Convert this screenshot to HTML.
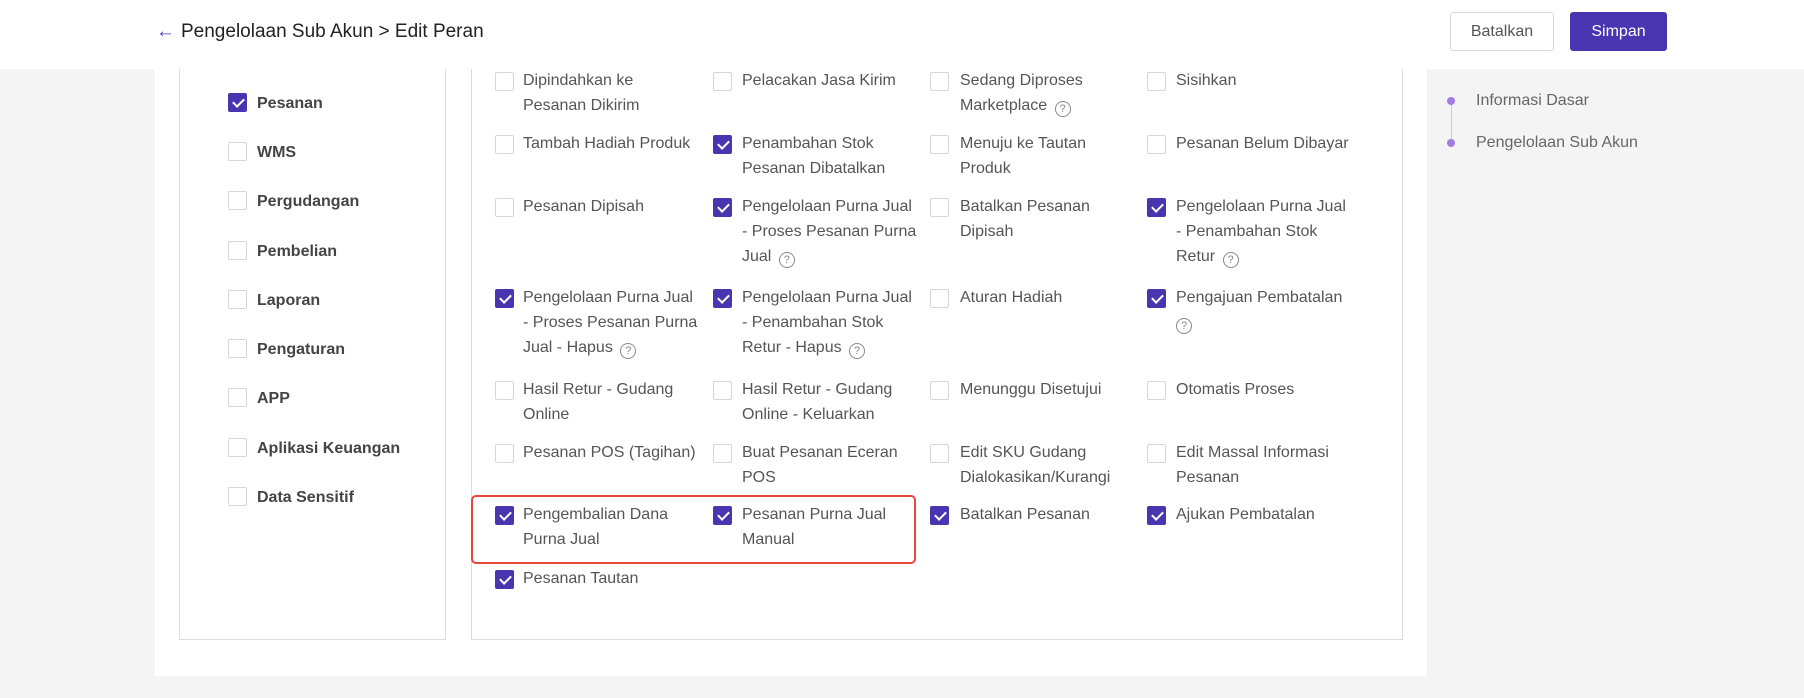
<!DOCTYPE html>
<html><head><meta charset="utf-8"><style>
*{margin:0;padding:0;box-sizing:border-box}
body{width:1804px;height:698px;background:#f4f4f4;font-family:"Liberation Sans",sans-serif;position:relative;overflow:hidden;color:#555}
.hdr{position:absolute;left:0;top:0;width:1804px;height:69px;background:#fff}
.title{position:absolute;left:156px;top:21px;font-size:19px;color:#222}
.title .ar{color:#4a35b1;margin-right:6px;font-weight:normal}
.btn{position:absolute;top:12px;height:39px;border-radius:3px;font-size:16px;line-height:37px;text-align:center}
.b1{left:1450px;width:104px;border:1px solid #d8d8d8;color:#555;background:#fff}
.b2{left:1570px;width:97px;background:#4a35b1;color:#fff;border:1px solid #4a35b1}
.main{position:absolute;left:155px;top:69px;width:1272px;height:607px;background:#fff}
.lbox{position:absolute;left:179px;top:69px;width:267px;height:571px;border:1px solid #dcdcdc;border-top:none}
.rbox{position:absolute;left:471px;top:69px;width:932px;height:571px;border:1px solid #dcdcdc;border-top:none}
.cb{position:absolute;width:19px;height:19px;border:1px solid #d6d6d6;border-radius:2px;background:#fff}
.cb.c{background:#4a35b1;border-color:#4a35b1}
.cb.c:after{content:"";position:absolute;left:6px;top:2px;width:5px;height:9px;border:solid #fff;border-width:0 2px 2px 0;transform:rotate(45deg)}
.ll{position:absolute;font-size:16px;font-weight:bold;color:#444;margin-top:1px}
.it{position:absolute;font-size:16px;line-height:25px;color:#555;white-space:nowrap}
.q{display:inline-block;width:16px;height:16px;border:1.3px solid #888;border-radius:50%;font-size:11px;line-height:14px;text-align:center;color:#888;vertical-align:-2px;margin-left:3px}
.red{position:absolute;left:471px;top:495px;width:445px;height:69px;border:2.5px solid #e8473f;border-radius:5px}
.side{position:absolute;font-size:16px;color:#666}
.dot{position:absolute;width:8px;height:8px;border-radius:50%;background:#a07de0}
</style></head><body>
<div class="hdr"></div>
<div class="title"><span class="ar">←</span>Pengelolaan Sub Akun &gt; Edit Peran</div>
<div class="btn b1">Batalkan</div>
<div class="btn b2">Simpan</div>
<div class="main"></div>
<div class="lbox"></div>
<div class="rbox"></div>
<div class="line" style="position:absolute;left:1451px;top:104px;width:1px;height:40px;background:#ccc"></div>
<div class="dot" style="left:1447px;top:97px"></div>
<div class="dot" style="left:1447px;top:139px"></div>
<div class="side" style="left:1476px;top:92px">Informasi Dasar</div>
<div class="side" style="left:1476px;top:134px">Pengelolaan Sub Akun</div>

<div class="cb c" style="left:228px;top:93px"></div><div class="ll" style="left:257px;top:94px">Pesanan</div>
<div class="cb" style="left:228px;top:142px"></div><div class="ll" style="left:257px;top:143px">WMS</div>
<div class="cb" style="left:228px;top:191px"></div><div class="ll" style="left:257px;top:192px">Pergudangan</div>
<div class="cb" style="left:228px;top:241px"></div><div class="ll" style="left:257px;top:242px">Pembelian</div>
<div class="cb" style="left:228px;top:290px"></div><div class="ll" style="left:257px;top:291px">Laporan</div>
<div class="cb" style="left:228px;top:339px"></div><div class="ll" style="left:257px;top:340px">Pengaturan</div>
<div class="cb" style="left:228px;top:388px"></div><div class="ll" style="left:257px;top:389px">APP</div>
<div class="cb" style="left:228px;top:438px"></div><div class="ll" style="left:257px;top:439px">Aplikasi Keuangan</div>
<div class="cb" style="left:228px;top:487px"></div><div class="ll" style="left:257px;top:488px">Data Sensitif</div>

<div class="cb" style="left:495px;top:72px"></div><div class="it" style="left:523px;top:68px">Dipindahkan ke<br>Pesanan Dikirim</div>
<div class="cb" style="left:713px;top:72px"></div><div class="it" style="left:742px;top:68px">Pelacakan Jasa Kirim</div>
<div class="cb" style="left:930px;top:72px"></div><div class="it" style="left:960px;top:68px">Sedang Diproses<br>Marketplace <span class="q">?</span></div>
<div class="cb" style="left:1147px;top:72px"></div><div class="it" style="left:1176px;top:68px">Sisihkan</div>

<div class="cb" style="left:495px;top:135px"></div><div class="it" style="left:523px;top:131px">Tambah Hadiah Produk</div>
<div class="cb c" style="left:713px;top:135px"></div><div class="it" style="left:742px;top:131px">Penambahan Stok<br>Pesanan Dibatalkan</div>
<div class="cb" style="left:930px;top:135px"></div><div class="it" style="left:960px;top:131px">Menuju ke Tautan<br>Produk</div>
<div class="cb" style="left:1147px;top:135px"></div><div class="it" style="left:1176px;top:131px">Pesanan Belum Dibayar</div>

<div class="cb" style="left:495px;top:198px"></div><div class="it" style="left:523px;top:194px">Pesanan Dipisah</div>
<div class="cb c" style="left:713px;top:198px"></div><div class="it" style="left:742px;top:194px">Pengelolaan Purna Jual<br>- Proses Pesanan Purna<br>Jual <span class="q">?</span></div>
<div class="cb" style="left:930px;top:198px"></div><div class="it" style="left:960px;top:194px">Batalkan Pesanan<br>Dipisah</div>
<div class="cb c" style="left:1147px;top:198px"></div><div class="it" style="left:1176px;top:194px">Pengelolaan Purna Jual<br>- Penambahan Stok<br>Retur <span class="q">?</span></div>

<div class="cb c" style="left:495px;top:289px"></div><div class="it" style="left:523px;top:285px">Pengelolaan Purna Jual<br>- Proses Pesanan Purna<br>Jual - Hapus <span class="q">?</span></div>
<div class="cb c" style="left:713px;top:289px"></div><div class="it" style="left:742px;top:285px">Pengelolaan Purna Jual<br>- Penambahan Stok<br>Retur - Hapus <span class="q">?</span></div>
<div class="cb" style="left:930px;top:289px"></div><div class="it" style="left:960px;top:285px">Aturan Hadiah</div>
<div class="cb c" style="left:1147px;top:289px"></div><div class="it" style="left:1176px;top:285px">Pengajuan Pembatalan<br><span class="q" style="margin-left:0">?</span></div>

<div class="cb" style="left:495px;top:381px"></div><div class="it" style="left:523px;top:377px">Hasil Retur - Gudang<br>Online</div>
<div class="cb" style="left:713px;top:381px"></div><div class="it" style="left:742px;top:377px">Hasil Retur - Gudang<br>Online - Keluarkan</div>
<div class="cb" style="left:930px;top:381px"></div><div class="it" style="left:960px;top:377px">Menunggu Disetujui</div>
<div class="cb" style="left:1147px;top:381px"></div><div class="it" style="left:1176px;top:377px">Otomatis Proses</div>

<div class="cb" style="left:495px;top:444px"></div><div class="it" style="left:523px;top:440px">Pesanan POS (Tagihan)</div>
<div class="cb" style="left:713px;top:444px"></div><div class="it" style="left:742px;top:440px">Buat Pesanan Eceran<br>POS</div>
<div class="cb" style="left:930px;top:444px"></div><div class="it" style="left:960px;top:440px">Edit SKU Gudang<br>Dialokasikan/Kurangi</div>
<div class="cb" style="left:1147px;top:444px"></div><div class="it" style="left:1176px;top:440px">Edit Massal Informasi<br>Pesanan</div>

<div class="cb c" style="left:495px;top:506px"></div><div class="it" style="left:523px;top:502px">Pengembalian Dana<br>Purna Jual</div>
<div class="cb c" style="left:713px;top:506px"></div><div class="it" style="left:742px;top:502px">Pesanan Purna Jual<br>Manual</div>
<div class="cb c" style="left:930px;top:506px"></div><div class="it" style="left:960px;top:502px">Batalkan Pesanan</div>
<div class="cb c" style="left:1147px;top:506px"></div><div class="it" style="left:1176px;top:502px">Ajukan Pembatalan</div>

<div class="cb c" style="left:495px;top:570px"></div><div class="it" style="left:523px;top:566px">Pesanan Tautan</div>
<div class="red"></div>
</body></html>
